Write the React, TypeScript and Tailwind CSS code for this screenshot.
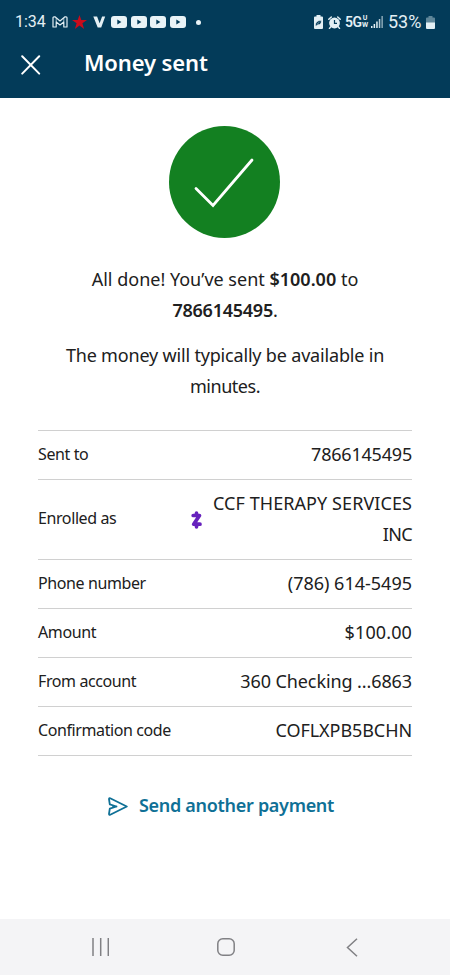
import React from "react";

function VideoIcon() {
  return (
    <svg className="h-[12px] w-[16px] shrink-0" viewBox="0 0 16 12">
      <rect width="16" height="12" rx="3" fill="#e9f3f7" />
      <path d="M6.300 3.600v4.800L10.400 6z" fill="#033b59" />
    </svg>
  );
}

function StatusBar() {
  return (
    <div className="flex h-[44px] items-center pl-[15px] pr-[15px] text-[#e3eff4]">
      <span className="w-[32px] whitespace-nowrap font-[Roboto,sans-serif] text-[16px] leading-none">1:34</span>
      <svg className="ml-[5px] h-[12px] w-[16px]" viewBox="0 0 16 12" fill="none" stroke="currentColor" strokeWidth="1.2" strokeLinejoin="round">
        <path d="M1 11V1.800Q1 .8 2 .8h1L8 5l5-4.200h1q1 0 1 1V11h-3.200V6L8 9 4.200 6v5z" />
        <path d="M4.200 2v4M11.800 2v4" strokeWidth=".7" />
      </svg>
      <svg className="ml-[4px] h-[14px] w-[15px]" viewBox="0 0 15 14">
        <path d="M7.500 0l1.800 5H15l-4.600 3.300L12.100 14 7.500 10.500 2.900 14l1.700-5.700L0 5h5.700z" fill="#c90b1b" />
      </svg>
      <svg className="ml-[6px] h-[12px] w-[13px]" viewBox="0 0 13 12">
        <path d="M.3 .5h3.800l2.500 6.700L9.100.5H12.200L8.200 11.500H4.700z" fill="currentColor" />
      </svg>
      <div className="ml-[5px] flex gap-[3.700px]">
        <VideoIcon />
        <VideoIcon />
        <VideoIcon />
        <VideoIcon />
      </div>
      <span className="ml-[10px] size-[5px] rounded-full bg-[#e9f3f7]" />
      <div className="ml-auto flex items-center">
        <svg className="mr-[-2px] h-[14px] w-[9px]" viewBox="0 0 9 14">
          <path d="M2.500 0h4v1.500H8q1 0 1 1V13q0 1-1 1H1q-1 0-1-1V2.500q0-1 1-1h1.500z" fill="currentColor" />
          <path d="M1.500 10.500Q1.500 5.500 7.300 5.500 7.500 10 4 9.600L2 11zM3.300 8.500l2-1" fill="#033b59" stroke="#e3eff4" strokeWidth=".5" />
        </svg>
        <svg className="ml-[7px] mr-[-1px] h-[13px] w-[13px]" viewBox="0 0 13 13">
          <circle cx="6.500" cy="7" r="5.400" fill="currentColor" />
          <path d="M.8 3.300L3.300 1M12.200 3.300L9.700 1M2.800 10.800L1.500 12.400M10.200 10.800l1.300 1.600" stroke="currentColor" strokeWidth="1.500" strokeLinecap="round" />
          <path d="M6.500 4v3.400H9" stroke="#033b59" strokeWidth="1.200" fill="none" />
        </svg>
        <span className="ml-[5px] w-[17px] whitespace-nowrap font-[Roboto,sans-serif] text-[14px] font-semibold leading-none tracking-[-0.400px]">5G</span>
        <span className="flex w-[6px] flex-col items-center font-[Roboto,sans-serif] text-[7px] font-bold leading-[7px]">
          <span>U</span>
          <span>W</span>
        </span>
        <svg className="ml-[3px] h-[12px] w-[12px]" viewBox="0 0 12 12" fill="currentColor">
          <rect x="0" y="10" width="1.500" height="2" />
          <rect x="2.600" y="8" width="1.500" height="4" />
          <rect x="5.200" y="5.500" width="1.500" height="6.500" />
          <rect x="7.800" y="3" width="1.500" height="9" opacity=".8" />
          <rect x="10.400" y="0" width="1.500" height="12" opacity=".6" />
        </svg>
        <span className="ml-[5px] w-[36px] whitespace-nowrap font-[Roboto,sans-serif] text-[18px] leading-none">53%</span>
        <svg className="ml-[2px] h-[13px] w-[9px]" viewBox="0 0 9 13">
          <path d="M2.500 0h4v1.500H8q1 0 1 1V7H0V2.500q0-1 1-1h1.500z" fill="#5f8699" />
          <path d="M0 6.500h9V12q0 1-1 1H1q-1 0-1-1z" fill="currentColor" />
        </svg>
      </div>
    </div>
  );
}

function Row({ label, children }: { label: string; children: React.ReactNode }) {
  return (
    <div className="flex items-center justify-between border-b border-[#d0d0d0] pb-[9px] pt-[8.150px] leading-[31px]">
      <span className="whitespace-nowrap text-[16px] tracking-[-0.400px]">{label}</span>
      {children}
    </div>
  );
}

export default function App() {
  return (
    <div className="flex h-[975px] w-[450px] flex-col overflow-hidden bg-white font-['Noto_Sans',sans-serif] text-[#202020]">
      <header className="h-[97.500px] shrink-0 bg-[#033b59]">
        <StatusBar />
        <div className="flex h-[40px] items-center pl-[21px]">
          <svg className="mt-[2px] h-[20px] w-[20px]" viewBox="0 0 20 20" fill="none" stroke="#fff" strokeWidth="2" strokeLinecap="round">
            <path d="M1.200 1.200l17 17.400M18.200 1.200l-17 17.400" />
          </svg>
          <h1 className="-mt-[4px] ml-[43px] text-[22px] font-semibold leading-none tracking-[-0.120px] text-white">Money sent</h1>
        </div>
      </header>

      <main className="flex flex-1 flex-col px-[38px]">
        <svg className="mx-auto mt-[27.500px] h-[113px] w-[112px] shrink-0" viewBox="0 0 112 113">
          <ellipse cx="55.500" cy="57" rx="55.500" ry="56" fill="#138021" />
          <path d="M27 63.500L44 80.500 83 35" fill="none" stroke="#fff" strokeWidth="2.800" strokeLinecap="round" />
        </svg>
        <div className="mt-[26px] text-center text-[18px] leading-[31px]">
          <p>
            <span className="whitespace-nowrap">All done! You’ve sent <b className="font-semibold">$100.00</b> to</span>
            <br />
            <span className="tracking-[-0.250px]"><b className="font-semibold">7866145495</b>.</span>
          </p>
          <p className="mt-[13.500px]">
            <span className="whitespace-nowrap tracking-[-0.180px]">The money will typically be available in</span>
            <br />
            <span className="tracking-[-0.450px]">minutes.</span>
          </p>
        </div>

        <div className="mt-[28px] border-t border-[#d0d0d0] text-[18px]">
          <Row label="Sent to"><span className="tracking-[-0.200px]">7866145495</span></Row>
          <Row label="Enrolled as">
            <div className="flex items-center">
              <svg className="mr-[11px] mt-[2px] h-[18px] w-[11px]" viewBox="0 0 11 18" fill="none" stroke="#6722bd" strokeWidth="3.700" strokeLinejoin="round" strokeLinecap="round">
                <path d="M2.200 4.500H8.500L2.700 13.200h6.300" />
                <path d="M5.500 2.200v1.500M5.500 14v1.800" />
              </svg>
              <span className="text-right tracking-[0.080px]">CCF THERAPY SERVICES<br /><span className="tracking-[-0.600px]">INC</span></span>
            </div>
          </Row>
          <Row label="Phone number"><span>(786) 614-5495</span></Row>
          <Row label="Amount"><span className="tracking-[0.120px]">$100.00</span></Row>
          <Row label="From account"><span className="tracking-[-0.100px]">360 Checking ...6863</span></Row>
          <Row label="Confirmation code"><span className="tracking-[-0.080px]">COFLXPB5BCHN</span></Row>
        </div>

        <div className="mt-[33.500px] flex items-center pl-[70px] text-[#0f7096]">
          <svg className="mt-[2px] h-[19px] w-[20px]" viewBox="0 0 20 19" fill="none" stroke="currentColor" strokeWidth="1.800" strokeLinejoin="round" strokeLinecap="round">
            <path d="M2.200 1.300Q1 .8 1 2.200L1.800 7.300 8.500 9.500 1.800 11.700 1 16.800Q1 18.200 2.200 17.700L18.800 9.500zM8.500 9.500H5" />
          </svg>
          <span className="ml-[11px] whitespace-nowrap text-[18px] font-semibold leading-[31px] tracking-[-0.300px]">Send another payment</span>
        </div>
      </main>

      <nav className="flex h-[56px] shrink-0 items-center bg-[#f4f4f6] pl-[92px]">
        <svg className="h-[18px] w-[17px]" viewBox="0 0 17 18" stroke="#808084" strokeWidth="1.500">
          <path d="M1 0v18M8.700 0v18M16.300 0v18" />
        </svg>
        <svg className="ml-[108px] h-[18px] w-[18px]" viewBox="0 0 18 18" fill="none" stroke="#808084" strokeWidth="1.500">
          <rect x=".8" y=".8" width="16.400" height="16.400" rx="5" />
        </svg>
        <svg className="ml-[111px] h-[19px] w-[12px]" viewBox="0 0 12 19" fill="none" stroke="#808084" strokeWidth="1.500">
          <path d="M11 .8L1.500 9.500 11 18.200" />
        </svg>
      </nav>
    </div>
  );
}
